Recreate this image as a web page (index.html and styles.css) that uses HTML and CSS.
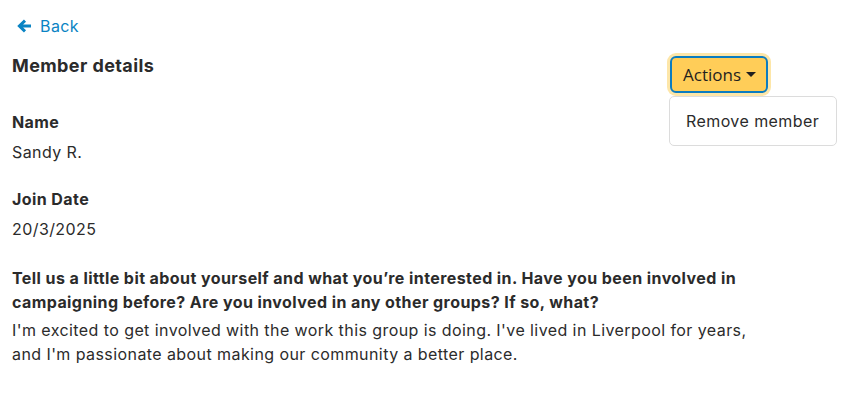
FILE: index.html
```html
<!DOCTYPE html>
<html>
<head>
<meta charset="utf-8">
<link rel="stylesheet" href="styles.css">
</head>
<body>
<div class="page">
  <a class="back" href="#">
    <svg class="back-icon" width="15" height="14" viewBox="0 0 15 14"><path d="M8 1.6 L2.4 7 L8 12.4 M2.8 7 H14" fill="none" stroke="currentColor" stroke-width="3" stroke-linejoin="miter"/></svg>
    <span>Back</span>
  </a>
  <div class="header">
    <h1 class="title">Member details</h1>
    <div class="actions">
      <button class="actions-btn">Actions<span class="caret"></span></button>
      <div class="menu">
        <div class="menu-item">Remove member</div>
      </div>
    </div>
  </div>
  <dl class="fields">
    <dt>Name</dt>
    <dd>Sandy R.</dd>
    <dt>Join Date</dt>
    <dd>20/3/2025</dd>
    <dt class="question">Tell us a little bit about yourself and what you’re interested in. Have you been involved in campaigning before? Are you involved in any other groups? If so, what?</dt>
    <dd class="answer">I'm excited to get involved with the work this group is doing. I've lived in Liverpool for years, and I'm passionate about making our community a better place.</dd>
  </dl>
</div>
</body>
</html>
```
FILE: styles.css
```css
html, body { margin: 0; padding: 0; background: #fff; }
body { font-family: Inter, "Noto Sans", sans-serif; color: #2b2b2b; font-size: 16px; letter-spacing: 0.42px; }
.page { width: 756px; padding: 14px 12px 12px; }
.back { display: inline-flex; align-items: center; gap: 8px; color: #0a84c4; text-decoration: none; font-size: 16px; line-height: 24px; margin-left: 5px; }
.back-icon { display: block; }
.header { display: flex; justify-content: space-between; align-items: flex-start; margin-top: 7px; }
.title { margin: 9px 0 0; font-size: 18px; font-weight: 700; line-height: 24px; letter-spacing: 0.4px; }
.actions { position: relative; margin-top: 11px; }
.actions-btn { display: flex; align-items: center; gap: 5px; height: 37px; padding: 0 10px 0 11px; font-family: "Open Sans", sans-serif; font-size: 17px; letter-spacing: 0; color: #1f1f1f; background: #ffcd58; border: 2px solid #0b7cc0; border-radius: 6px; box-shadow: 0 0 0 3px #fde6a8; }
.caret { width: 0; height: 0; border-left: 5px solid transparent; border-right: 5px solid transparent; border-top: 5px solid #1f1f1f; }
.menu { position: absolute; left: -1px; top: 40px; width: 166px; background: #fff; border: 1px solid #dcdcdc; border-radius: 5px; padding: 12px 0; }
.menu-item { padding: 0 16px; font-size: 16px; line-height: 24px; color: #2b2b2b; white-space: nowrap; }
.fields { margin: 17px 0 0; }
dt { font-weight: 700; line-height: 24px; margin-top: 23px; }
dt:first-child { margin-top: 0; }
dd { margin: 6px 0 0; line-height: 24px; }
.question { margin-top: 25px; }
.answer { margin-top: 4px; }
```
